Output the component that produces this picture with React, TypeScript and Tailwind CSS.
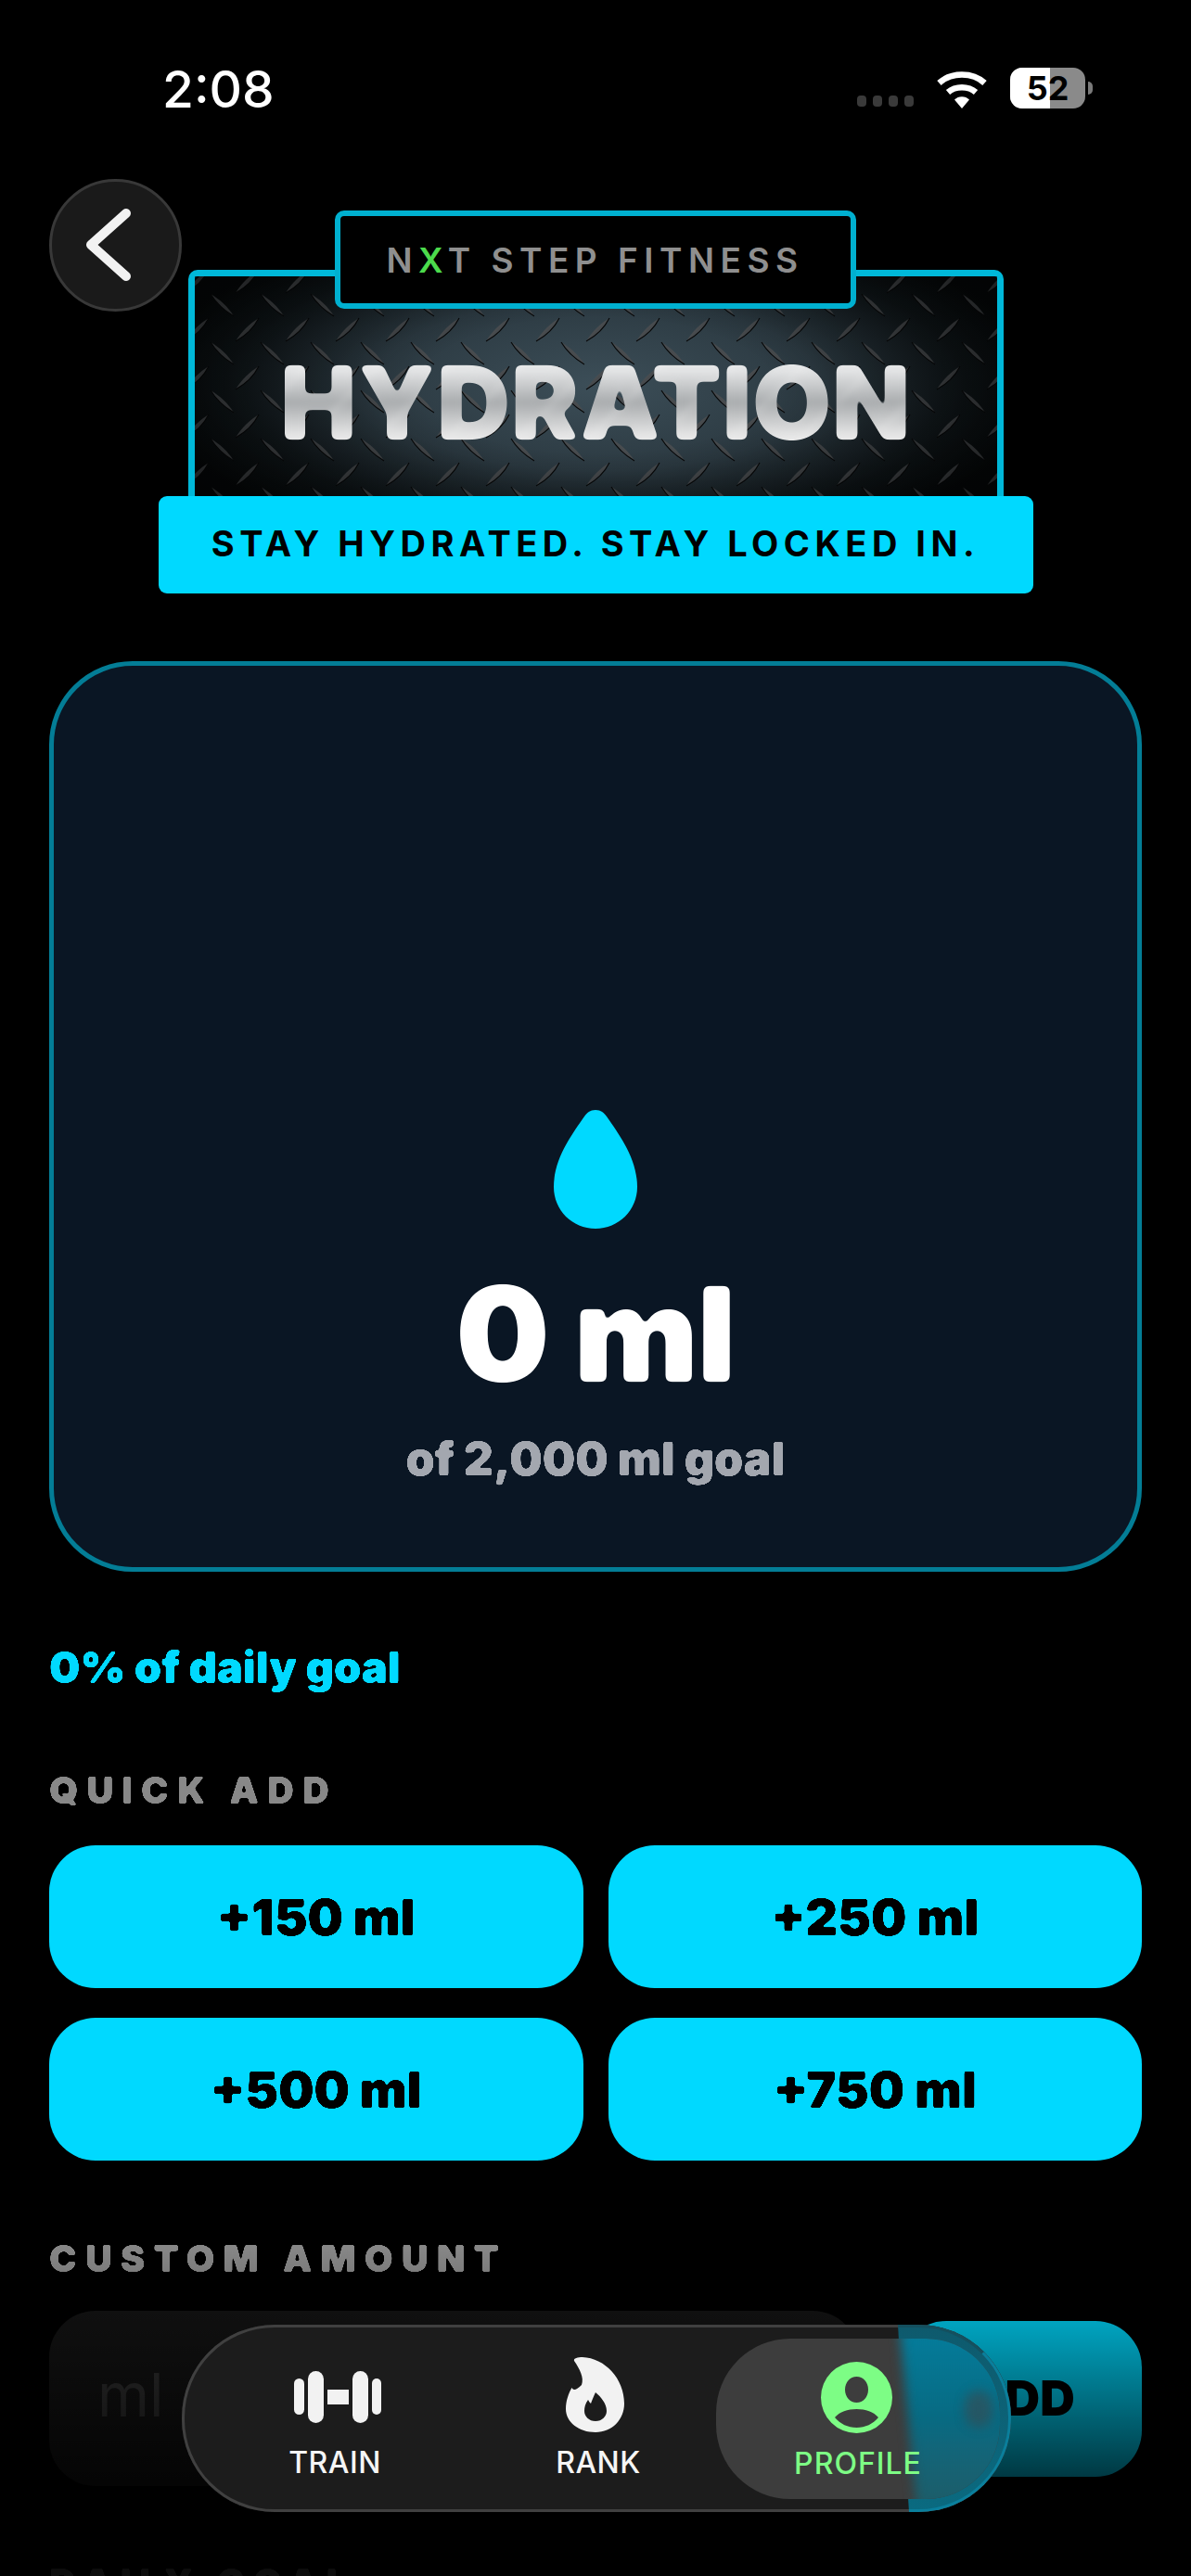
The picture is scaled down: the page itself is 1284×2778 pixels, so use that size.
import React from "react";

function Filters() {
  return (
    <svg className="absolute h-0 w-0" aria-hidden="true">
      <defs>
        <filter id="round-sm" x="-5%" y="-10%" width="110%" height="120%" colorInterpolationFilters="sRGB">
          <feGaussianBlur in="SourceGraphic" stdDeviation="1.3" />
          <feColorMatrix values="1 0 0 0 0 0 1 0 0 0 0 0 1 0 0 0 0 0 9 -3.6" />
        </filter>
        <filter id="round-lg" x="-5%" y="-10%" width="110%" height="120%" colorInterpolationFilters="sRGB">
          <feGaussianBlur in="SourceGraphic" stdDeviation="3.2" />
          <feColorMatrix values="1 0 0 0 0 0 1 0 0 0 0 0 1 0 0 0 0 0 9 -3.8" />
        </filter>
      </defs>
    </svg>
  );
}

function Wifi() {
  return (
    <svg width="56" height="42" viewBox="0 0 56 42" fill="none">
      <path d="M3.5 14.5C16.5 2.5 39.5 2.5 52.5 14.5" stroke="#fff" strokeWidth="6.5" />
      <path d="M13 24.5C21 17.5 35 17.5 43 24.5" stroke="#fff" strokeWidth="6.5" />
      <path d="M20 32.5C24 28 32 28 36 32.5L28 42Z" fill="#fff" />
    </svg>
  );
}

function Drop() {
  return (
    <svg width="90" height="128" viewBox="0 0 90 128" fill="#00d9ff">
      <path d="M45 0C51 0 54 3 57 7C70 26 90 52 90 83C90 108 70 128 45 128C20 128 0 108 0 83C0 52 20 26 33 7C36 3 39 0 45 0Z" />
    </svg>
  );
}

function Dumbbell() {
  return (
    <svg width="94" height="56" viewBox="0 0 94 56" fill="#f2f2f2">
      <rect x="0" y="8" width="11" height="39" rx="5.5" />
      <rect x="15" y="0" width="17" height="56" rx="8.5" />
      <rect x="36" y="20" width="23" height="16" />
      <rect x="63" y="0" width="17" height="56" rx="8.5" />
      <rect x="84" y="8" width="10" height="39" rx="5" />
    </svg>
  );
}

function Flame() {
  return (
    <svg width="63" height="81" viewBox="0 0 63 81" fill="#f2f2f2">
      <path
        fillRule="evenodd"
        d="M9 4C8 1 13 0 18 0C42 1 63 23 63 50C63 67 50 81 32 81C14 81 0 70 0 56C0 47 3 39 6.5 33C8 36 11 36 17 30C20 22 15 13 9 4ZM32 38C30 42 28 47 27 50C26 49 25 48 24 46C21 50 20 54 20 58C20 64 25 69 32 69C39 69 44 64 44 58C44 50 38 43 32 38Z"
      />
    </svg>
  );
}

function ProfileIcon() {
  return (
    <svg width="77" height="77" viewBox="0 0 77 77" fill="#7dfd85">
      <path
        fillRule="evenodd"
        d="M38.5 0A38.5 38.5 0 1 1 38.5 77A38.5 38.5 0 1 1 38.5 0ZM38.5 16C31.5 16 26 22 26 30C26 38 31.5 44 38.5 44C45.5 44 51 38 51 30C51 22 45.5 16 38.5 16ZM38.5 51C29 51 20 54 15 60C21 67 29 71 38.5 71C48 71 56 67 62 60C57 54 48 51 38.5 51Z"
      />
    </svg>
  );
}

function Plate() {
  return (
    <svg className="absolute inset-0 h-full w-full" xmlns="http://www.w3.org/2000/svg">
      <defs>
        <linearGradient id="lens-a" x1="0" y1="0" x2="1" y2="1">
          <stop offset="0" stopColor="#5a5e61" />
          <stop offset="1" stopColor="#34373a" />
        </linearGradient>
        <linearGradient id="lens-b" x1="1" y1="0" x2="0" y2="1">
          <stop offset="0" stopColor="#5a5e61" />
          <stop offset="1" stopColor="#34373a" />
        </linearGradient>
        <pattern id="plate" x="43" y="44" width="54" height="52" patternUnits="userSpaceOnUse">
          <path d="M1 26C7 16 16 7 26 1C21 11 12 20 1 26Z" fill="url(#lens-a)" />
          <path d="M1 26C12 20 21 11 26 1" stroke="#050607" strokeWidth="1.2" fill="none" />
          <path d="M28 27C38 33 47 41 53 51C43 45 34 37 28 27Z" fill="url(#lens-b)" />
          <path d="M28 27C34 37 43 45 53 51" stroke="#050607" strokeWidth="1.2" fill="none" />
        </pattern>
      </defs>
      <rect width="100%" height="100%" fill="url(#plate)" />
    </svg>
  );
}

function SectionTitle({ children }: { children: React.ReactNode }) {
  return (
    <div className="text-[40px] leading-none font-black tracking-[9px] text-[#888888] [filter:url(#round-sm)]">{children}</div>
  );
}

function QuickButton({ label }: { label: string }) {
  return (
    <button className="flex h-[154px] items-center justify-center rounded-[50px] bg-[#00d9ff] text-[54px] font-black text-black">
      <span className="[filter:url(#round-sm)]">{label}</span>
    </button>
  );
}

export default function App() {
  return (
    <div className="relative h-[2778px] w-[1284px] overflow-hidden bg-black font-['Inter',sans-serif] text-white">
      <Filters />

      {/* Status bar */}
      <div className="flex h-[140px] items-start justify-between pt-[66px] pr-[106px] pl-[175px]">
        <div className="text-[55px] leading-[60px] font-medium">2:08</div>
        <div className="flex items-end gap-[24px] pt-[7px]">
          <div className="mb-[2px] flex gap-[7px]">
            <span className="h-[12px] w-[10px] rounded-[4px] bg-[#3a3a3a]" />
            <span className="h-[12px] w-[10px] rounded-[4px] bg-[#3a3a3a]" />
            <span className="h-[12px] w-[10px] rounded-[4px] bg-[#3a3a3a]" />
            <span className="h-[12px] w-[10px] rounded-[4px] bg-[#3a3a3a]" />
          </div>
          <Wifi />
          <div className="flex items-center gap-[3px]">
            <div className="relative flex h-[44px] w-[81px] items-center justify-center overflow-hidden rounded-[13px] bg-[#8a8a8a]">
              <div className="absolute inset-y-0 left-0 w-[43px] bg-white" />
              <span className="relative text-[36px] leading-none font-bold text-black">52</span>
            </div>
            <div className="h-[14px] w-[5px] rounded-r-full bg-[#7a7a7a]" />
          </div>
        </div>
      </div>

      {/* Back button */}
      <button className="absolute top-[193px] left-[53px] flex h-[143px] w-[143px] items-center justify-center rounded-full border-[3px] border-[#383838] bg-[#1a1a1a]">
        <svg width="143" height="143" viewBox="0 0 143 143" fill="none" className="shrink-0">
          <path d="M83 37L45 71L83 105" stroke="#f2f2f2" strokeWidth="10" strokeLinecap="round" strokeLinejoin="round" />
        </svg>
      </button>

      {/* Header banner */}
      <div className="mt-[151px] flex flex-col items-center">
        <div className="relative h-[252px] w-[879px] rounded-t-[10px] border-[7px] border-b-0 border-[#00b8d9] bg-[radial-gradient(ellipse_56%_75%_at_50%_48%,#3c4e58_0%,#2c3a42_50%,#10171a_82%,#06090a_100%)]">
          <Plate />
          <div className="absolute inset-0 bg-[radial-gradient(ellipse_62%_85%_at_50%_48%,rgba(0,0,0,0)_35%,rgba(0,0,0,0.35)_70%,rgba(0,0,0,0.6)_100%)]" />
          <div className="absolute top-[-71px] left-[151px] flex h-[106px] w-[562px] items-center justify-center rounded-[10px] border-[6px] border-[#00b0d0] bg-black">
            <span className="text-[37px] leading-none font-semibold tracking-[6.5px] text-[#8f8f8f]">
              N<span className="text-[#4cdb4c]">X</span>T STEP FITNESS
            </span>
          </div>
          <div className="absolute inset-x-0 top-[76px] text-center text-[110px] leading-[120px] font-black tracking-[0.5px] text-transparent [background-image:repeating-linear-gradient(135deg,rgba(255,255,255,0)_0px,rgba(255,255,255,0)_40px,rgba(255,255,255,0.14)_46px,rgba(255,255,255,0)_54px),linear-gradient(180deg,#e6e7e8_20%,#a9acae_50%,#eaeaea_82%)] bg-clip-text [filter:url(#round-lg)]">
            HYDRATION
          </div>
        </div>
        <div className="relative z-10 -mt-[8px] flex h-[105px] w-[943px] items-center justify-center rounded-[9px] bg-[#00d9ff] pb-[2px] text-[38px] font-bold tracking-[5.5px] text-black">
          STAY HYDRATED. STAY LOCKED IN.
        </div>
      </div>

      {/* Main content */}
      <div className="px-[53px]">
        <div className="mt-[73px] flex h-[982px] flex-col items-center justify-end rounded-[90px] border-[5px] border-[#037d96] bg-[#0a1624] pb-[89px]">
          <Drop />
          <div className="mt-[33px] text-[142px] leading-[160px] font-black tracking-[-1px] text-white [filter:url(#round-lg)]">0 ml</div>
          <div className="mt-[27px] text-[50px] leading-[56px] font-black text-[#a3a7af] [filter:url(#round-sm)]">of 2,000 ml goal</div>
        </div>

        <div className="mt-[76px] text-[47px] leading-[54px] font-black text-[#00d9ff] [filter:url(#round-sm)]">0% of daily goal</div>

        <div className="mt-[86px]">
          <SectionTitle>QUICK ADD</SectionTitle>
        </div>
        <div className="mt-[39px] grid grid-cols-2 gap-x-[27px] gap-y-[32px]">
          <QuickButton label="+150 ml" />
          <QuickButton label="+250 ml" />
          <QuickButton label="+500 ml" />
          <QuickButton label="+750 ml" />
        </div>

        <div className="mt-[86px]">
          <SectionTitle>CUSTOM AMOUNT</SectionTitle>
        </div>
        <div className="mt-[36px] flex items-center justify-between">
          <div className="flex h-[189px] w-[873px] items-center rounded-[50px] bg-[#141414] pb-[8px] pl-[52px] text-[64px] text-[#333333]">ml</div>
          <button className="h-[168px] w-[261px] rounded-[50px] bg-[#00d9ff] text-[52px] font-black text-black">ADD</button>
        </div>

        <div className="mt-[84px]">
          <SectionTitle>DAILY GOAL</SectionTitle>
        </div>
      </div>

      {/* Bottom fade */}
      <div className="pointer-events-none absolute inset-x-0 bottom-0 h-[358px] bg-gradient-to-b from-black/0 via-black/95 via-90% to-black/90" />

      {/* Tab bar */}
      <nav className="absolute top-[2507px] left-[196px] h-[202px] w-[894px] rounded-[100px] bg-[#1c1c1c] shadow-[inset_0_0_0_3px_#404040]">
        <div className="absolute inset-0 rounded-[100px] border-[3px] border-[#0a7f9c] border-t-[#14505f] bg-gradient-to-b from-[#0e5a6d] to-[#0a6a80] [clip-path:polygon(772px_0,100%_0,100%_100%,784px_100%)]" />
        <div className="absolute top-[15px] right-[12px] bottom-[14px] left-[576px] overflow-hidden rounded-[80px] bg-[#3d3d3d]">
          <div className="absolute inset-[-10px] blur-[6px]">
            <div className="absolute inset-0 bg-gradient-to-b from-[#047d9c] via-[#076a82] to-[#1d5c68] [clip-path:polygon(208px_0,100%_0,100%_100%,226px_100%)]" />
          </div>
          <div className="absolute top-[56px] right-[8px] h-[40px] w-[30px] rounded-full bg-[#3a4a50] opacity-60 blur-[6px]" />
        </div>
        <div className="absolute inset-0">
          <div className="absolute top-[35px] left-0 flex w-[330px] flex-col items-center">
            <div className="mt-[15px] ml-[6px] flex h-[56px] items-center">
              <Dumbbell />
            </div>
            <div className="mt-[25px] text-[32px] leading-[36px] font-medium tracking-[0.5px] text-[#f5f5f5]">TRAIN</div>
          </div>
          <div className="absolute top-[35px] left-[384px] flex w-[130px] flex-col items-center">
            <div className="mr-[8px]">
              <Flame />
            </div>
            <div className="mt-[15px] text-[32px] leading-[36px] font-medium tracking-[0.5px] text-[#f5f5f5]">RANK</div>
          </div>
          <div className="absolute top-[40px] left-[629px] flex w-[200px] flex-col items-center">
            <div className="mr-[3px]">
              <ProfileIcon />
            </div>
            <div className="mt-[15px] text-[32px] leading-[36px] font-medium tracking-[1px] text-[#7dfd85]">PROFILE</div>
          </div>
        </div>
      </nav>
    </div>
  );
}
